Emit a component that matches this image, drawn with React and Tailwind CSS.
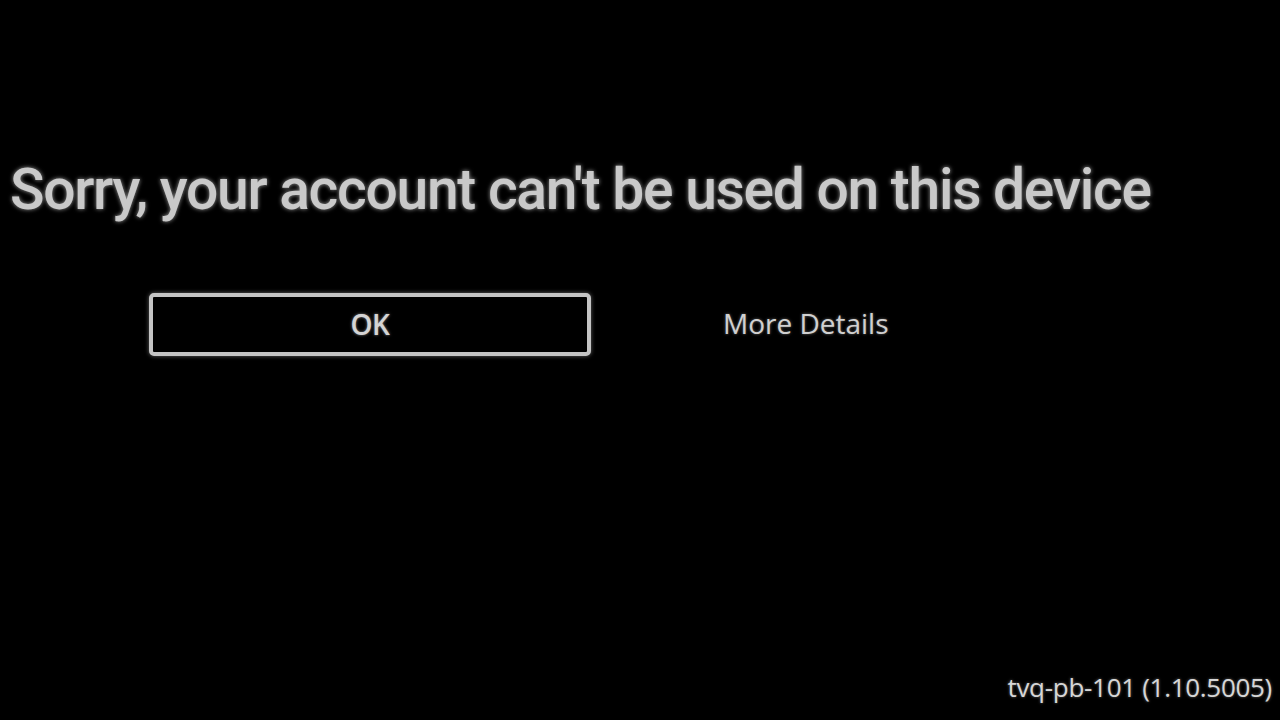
import React from 'react';

const App = () => {
  return (
    <div className="w-[1280px] h-[720px] bg-black flex flex-col font-['Open_Sans',Arial,sans-serif] overflow-hidden">
      <h1 className="pl-[10px] pt-[158px] font-['Roboto',Arial,sans-serif] text-[57px] leading-[64px] font-medium tracking-[-1.3px] text-[#c9c9c9] [text-shadow:0_0_4px_rgba(255,255,255,0.6)] whitespace-nowrap">
        Sorry, your account can't be used on this device
      </h1>
      <div className="flex items-center pl-[149px] mt-[71px]">
        <button className="w-[442px] h-[63px] border-4 border-[#c4c4c4] rounded-[5px] bg-black flex items-center justify-center pb-[2px] text-[28px] font-semibold tracking-[-0.5px] text-[#d4d4d4] [text-shadow:0_0_3px_rgba(255,255,255,0.5)] shadow-[0_0_4px_rgba(255,255,255,0.4)]">
          OK
        </button>
        <span className="ml-[132px] mb-[3px] text-[28px] font-medium text-[#d0d0d0] [text-shadow:0_0_3px_rgba(255,255,255,0.4)]">
          More Details
        </span>
      </div>
      <div className="mt-auto flex justify-end pr-[8px] pb-[13px]">
        <span className="text-[26px] font-medium text-[#d6d6d6] tracking-[-0.3px] [text-shadow:0_0_3px_rgba(255,255,255,0.4)]">
          tvq-pb-101 (1.10.5005)
        </span>
      </div>
    </div>
  );
};

export default App;
